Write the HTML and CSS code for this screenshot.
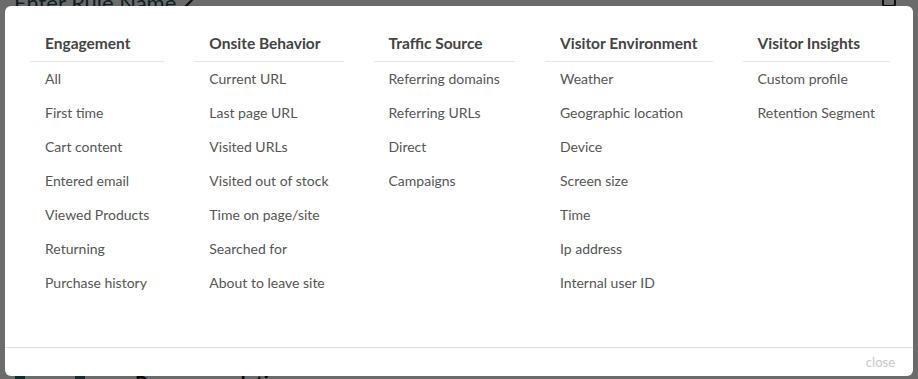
FILE: index.html
```html
<!DOCTYPE html>
<html>
<head>
<meta charset="utf-8">
<link rel="stylesheet" href="styles.css">
</head>
<body>
<div class="page">
  <div class="page-head">
    <span class="rule-name">Enter Rule Name</span>
    <svg class="pencil" width="14" height="14" viewBox="0 0 14 14"><path d="M2 12 L11 3" stroke="#2a2a2a" stroke-width="2.2" fill="none"/></svg>
    <span class="spacer"></span>
    <svg class="copy" width="18" height="16" viewBox="0 0 18 16"><rect x="3" y="-4" width="12" height="14" rx="2" fill="none" stroke="#222" stroke-width="2"/></svg>
  </div>
  <div class="page-foot">
    <span class="dot teal"></span>
    <span class="dot grey"></span>
    <span class="foot-text">Recommendations</span>
  </div>
</div>
<div class="overlay"></div>
<div class="modal">
  <div class="modal-body">
    <div class="col">
      <div class="col-head">Engagement</div>
      <ul class="items">
        <li>All</li>
        <li>First time</li>
        <li>Cart content</li>
        <li>Entered email</li>
        <li>Viewed Products</li>
        <li>Returning</li>
        <li>Purchase history</li>
      </ul>
    </div>
    <div class="col">
      <div class="col-head">Onsite Behavior</div>
      <ul class="items">
        <li>Current URL</li>
        <li>Last page URL</li>
        <li>Visited URLs</li>
        <li>Visited out of stock</li>
        <li>Time on page/site</li>
        <li>Searched for</li>
        <li>About to leave site</li>
      </ul>
    </div>
    <div class="col">
      <div class="col-head">Traffic Source</div>
      <ul class="items">
        <li>Referring domains</li>
        <li>Referring URLs</li>
        <li>Direct</li>
        <li>Campaigns</li>
      </ul>
    </div>
    <div class="col">
      <div class="col-head">Visitor Environment</div>
      <ul class="items">
        <li>Weather</li>
        <li>Geographic location</li>
        <li>Device</li>
        <li>Screen size</li>
        <li>Time</li>
        <li>Ip address</li>
        <li>Internal user ID</li>
      </ul>
    </div>
    <div class="col">
      <div class="col-head">Visitor Insights</div>
      <ul class="items">
        <li>Custom profile</li>
        <li>Retention Segment</li>
      </ul>
    </div>
  </div>
  <div class="modal-foot">
    <span class="close">close</span>
  </div>
</div>
</body>
</html>
```
FILE: styles.css
```css
html, body {
  margin: 0;
  padding: 0;
}
body {
  width: 918px;
  height: 379px;
  overflow: hidden;
  position: relative;
  font-family: "Lato", "Open Sans", sans-serif;
  background: #fff;
}
.page {
  height: 379px;
  display: flex;
  flex-direction: column;
  justify-content: space-between;
}
.page-head {
  display: flex;
  align-items: flex-end;
  height: 10px;
  padding: 0 20px 0 14px;
  overflow: hidden;
}
.rule-name {
  font-size: 22px;
  line-height: 22px;
  color: #1e4a55;
  margin-bottom: -4px;
  white-space: nowrap;
}
.pencil {
  margin-left: 6px;
}
.spacer { flex: 1; }
.copy { margin-bottom: -2px; }
.page-foot {
  display: flex;
  align-items: flex-start;
  height: 6px;
  overflow: hidden;
  padding-left: 15px;
  gap: 50px;
}
.dot {
  width: 10px;
  height: 10px;
  border-radius: 2px;
}
.dot.teal { background: #1e6b6e; }
.dot.grey { background: #3a6d74; }
.foot-text {
  font-size: 20px;
  font-weight: 700;
  color: #111;
  line-height: 20px;
}
.overlay {
  position: absolute;
  inset: 0;
  background: rgba(0, 0, 0, 0.58);
}
.modal {
  position: absolute;
  left: 5px;
  top: 6px;
  width: 908px;
  height: 370px;
  background: #fff;
  border-radius: 6px;
  display: flex;
  flex-direction: column;
  overflow: hidden;
}
.modal-body {
  flex: 1;
  display: flex;
  align-items: flex-start;
  gap: 30px;
  padding: 27px 25px 0;
}
.col-head {
  font-size: 15.5px;
  font-weight: 700;
  line-height: 20px;
  color: #444;
  padding: 0 15px 8px;
  border-bottom: 1px solid #e6e6e6;
  white-space: nowrap;
}
.items {
  list-style: none;
  margin: 0;
  padding: 0;
}
.items li {
  font-size: 14px;
  line-height: 34px;
  color: #555;
  padding: 0 15px;
  white-space: nowrap;
}
.modal-foot {
  height: 28px;
  border-top: 1px solid #dcdcdc;
  display: flex;
  align-items: center;
  justify-content: flex-end;
  padding-right: 18px;
}
.close {
  font-size: 13px;
  color: #c8c8c8;
}
```
